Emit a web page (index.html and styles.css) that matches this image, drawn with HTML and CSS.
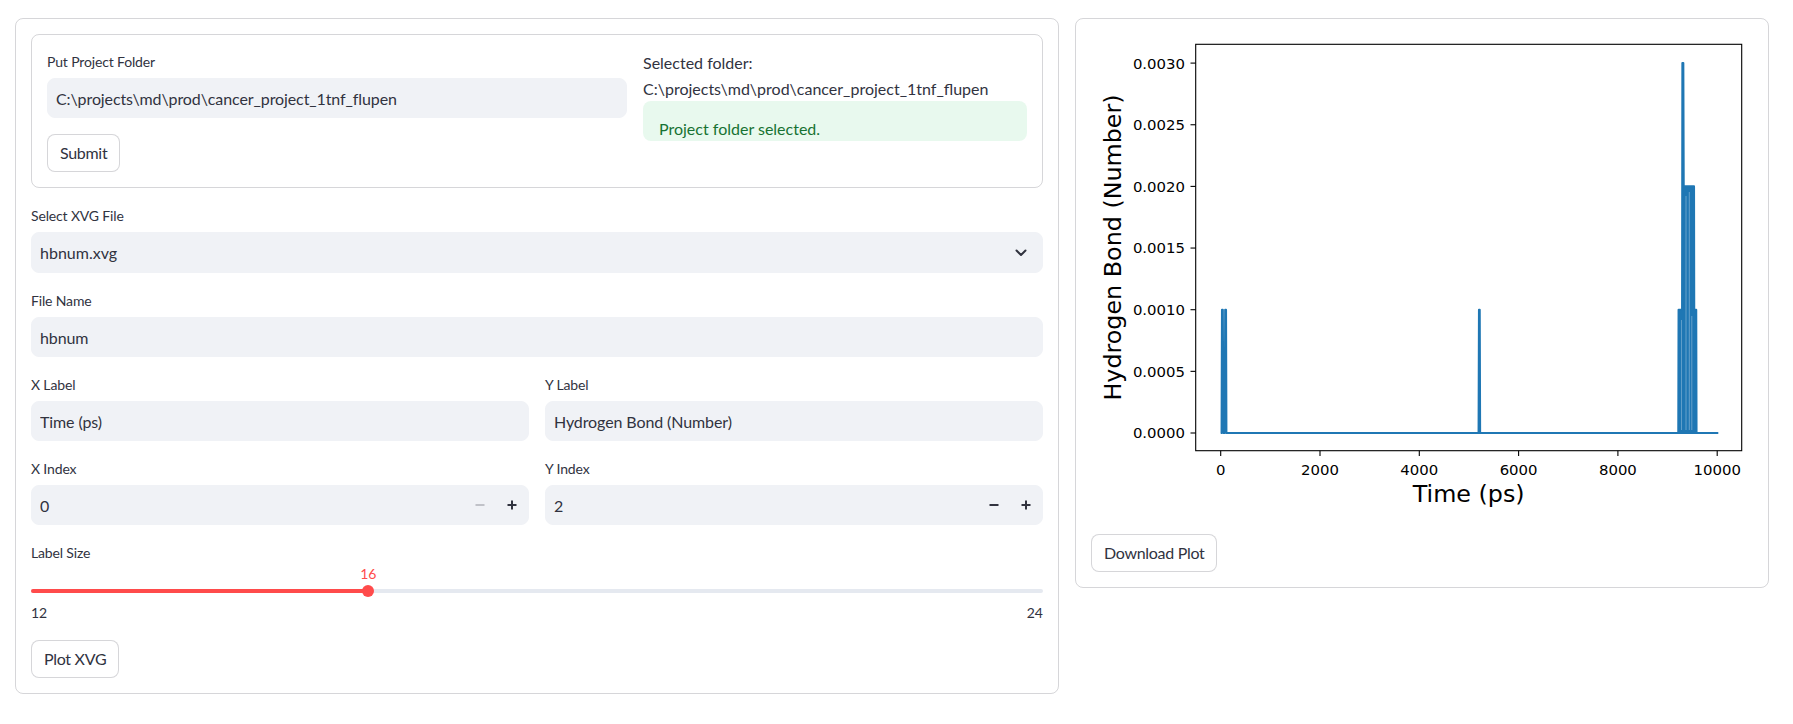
FILE: index.html
```html
<!DOCTYPE html>
<html lang="en">
<head>
<meta charset="utf-8">
<title>XVG Plotter</title>
<link rel="stylesheet" href="styles.css">
</head>
<body>
<main class="app">
  <section class="card">
    <form class="form-box">
      <div class="form-cols">
        <div class="col">
          <div class="field">
            <label class="wlabel">Put Project Folder</label>
            <input class="tinput" type="text" value="C:\projects\md\prod\cancer_project_1tnf_flupen" readonly>
          </div>
          <button type="button" class="btn">Submit</button>
        </div>
        <div class="col tight">
          <p class="md">Selected folder:<br>C:\projects\md\prod\cancer_project_1tnf_flupen</p>
          <div class="alert-success"><p>Project folder selected.</p></div>
        </div>
      </div>
    </form>

    <div class="field">
      <label class="wlabel">Select XVG File</label>
      <div class="select">
        <span class="select-val">hbnum.xvg</span>
        <svg class="chev" width="20" height="20" viewBox="0 0 20 20"><polyline points="5.5,7.5 10,12 14.5,7.5" fill="none" stroke="rgb(49,51,63)" stroke-width="2" stroke-linecap="round" stroke-linejoin="round"/></svg>
      </div>
    </div>

    <div class="field">
      <label class="wlabel">File Name</label>
      <input class="tinput" type="text" value="hbnum" readonly>
    </div>

    <div class="row2">
      <div class="field">
        <label class="wlabel">X Label</label>
        <input class="tinput" type="text" value="Time (ps)" readonly>
      </div>
      <div class="field">
        <label class="wlabel">Y Label</label>
        <input class="tinput" type="text" value="Hydrogen Bond (Number)" readonly>
      </div>
    </div>

    <div class="row2">
      <div class="field">
        <label class="wlabel">X Index</label>
        <div class="numinput">
          <input class="num-val" type="text" value="0" readonly>
          <button type="button" class="step disabled"><svg width="12" height="12" viewBox="0 0 12 12"><rect x="1.5" y="5" width="9" height="2" fill="currentColor"/></svg></button>
          <button type="button" class="step"><svg width="12" height="12" viewBox="0 0 12 12"><rect x="1.5" y="5" width="9" height="2" fill="currentColor"/><rect x="5" y="1.5" width="2" height="9" fill="currentColor"/></svg></button>
        </div>
      </div>
      <div class="field">
        <label class="wlabel">Y Index</label>
        <div class="numinput">
          <input class="num-val" type="text" value="2" readonly>
          <button type="button" class="step"><svg width="12" height="12" viewBox="0 0 12 12"><rect x="1.5" y="5" width="9" height="2" fill="currentColor"/></svg></button>
          <button type="button" class="step"><svg width="12" height="12" viewBox="0 0 12 12"><rect x="1.5" y="5" width="9" height="2" fill="currentColor"/><rect x="5" y="1.5" width="2" height="9" fill="currentColor"/></svg></button>
        </div>
      </div>
    </div>

    <div class="field">
      <label class="wlabel">Label Size</label>
      <div class="slider">
        <div class="track">
          <div class="fill" style="width: 33.333%"></div>
          <div class="thumb" style="left: 33.333%"><span class="thumb-val">16</span></div>
        </div>
      </div>
      <div class="ticks"><span>12</span><span>24</span></div>
    </div>

    <button type="button" class="btn">Plot XVG</button>
  </section>

  <section class="card">
    <svg class="plot" width="662" height="484" viewBox="0 0 662 484">
      <path class="series" d="M129.7 399 L130.6 399 L131 275.7 L131.8 275.7 L132.3 399 L133.8 399 L134.2 275.7 L135 275.7 L135.4 399 L387.6 399 L388 275.7 L388.7 275.7 L389.1 399 L627.3 399"/>
      <path class="series filled" d="M587.3 399 L587.6 275.7 L591.1 275.7 L591.4 29.1 L592.3 29.1 L592.7 152.4 L603 152.4 L603.2 275.7 L605.2 275.7 L605.5 399 Z"/>
      <g class="gaps">
        <line x1="590.6" y1="286" x2="590.6" y2="396"/>
        <line x1="595" y1="162" x2="595" y2="396"/>
        <line x1="598.3" y1="158" x2="598.3" y2="396"/>
        <line x1="600.8" y1="282" x2="600.8" y2="396"/>
      </g>
      <rect class="spines" x="104.7" y="10.3" width="546" height="406.4"/>
      <g class="tk">
        <line x1="99.5" y1="399" x2="104.7" y2="399"/>
        <line x1="99.5" y1="337.35" x2="104.7" y2="337.35"/>
        <line x1="99.5" y1="275.7" x2="104.7" y2="275.7"/>
        <line x1="99.5" y1="214.05" x2="104.7" y2="214.05"/>
        <line x1="99.5" y1="152.4" x2="104.7" y2="152.4"/>
        <line x1="99.5" y1="90.75" x2="104.7" y2="90.75"/>
        <line x1="99.5" y1="29.1" x2="104.7" y2="29.1"/>
        <line x1="129.7" y1="416.7" x2="129.7" y2="421.9"/>
        <line x1="229" y1="416.7" x2="229" y2="421.9"/>
        <line x1="328.3" y1="416.7" x2="328.3" y2="421.9"/>
        <line x1="427.6" y1="416.7" x2="427.6" y2="421.9"/>
        <line x1="526.9" y1="416.7" x2="526.9" y2="421.9"/>
        <line x1="626.2" y1="416.7" x2="626.2" y2="421.9"/>
      </g>
      <g class="tl-y">
        <text x="94" y="404.4">0.0000</text>
        <text x="94" y="342.75">0.0005</text>
        <text x="94" y="281.1">0.0010</text>
        <text x="94" y="219.45">0.0015</text>
        <text x="94" y="157.8">0.0020</text>
        <text x="94" y="96.15">0.0025</text>
        <text x="94" y="34.5">0.0030</text>
      </g>
      <g class="tl-x">
        <text x="129.7" y="441">0</text>
        <text x="229" y="441">2000</text>
        <text x="328.3" y="441">4000</text>
        <text x="427.6" y="441">6000</text>
        <text x="526.9" y="441">8000</text>
        <text x="626.2" y="441">10000</text>
      </g>
      <text class="axlabel" x="377.7" y="468.4">Time (ps)</text>
      <text class="axlabel" transform="translate(29.5 213.5) rotate(-90)">Hydrogen Bond (Number)</text>
    </svg>
    <button type="button" class="btn">Download Plot</button>
  </section>
</main>
</body>
</html>
```

FILE: styles.css
```css
* { box-sizing: border-box; }

body {
  margin: 0;
  background: #ffffff;
  color: rgb(49, 51, 63);
  font-family: Lato, "Liberation Sans", sans-serif;
  font-size: 16px;
}

.app {
  display: grid;
  grid-template-columns: 1044px 694px;
  column-gap: 16px;
  align-items: start;
  padding: 18px 24px 0 15px;
}

.card {
  border: 1px solid rgba(49, 51, 63, 0.2);
  border-radius: 8px;
  padding: 15px;
  display: flex;
  flex-direction: column;
  gap: 16px;
}

.form-box {
  margin: 0;
  border: 1px solid rgba(49, 51, 63, 0.2);
  border-radius: 8px;
  padding: 15px;
}

.form-cols {
  display: grid;
  grid-template-columns: 580fr 384fr;
  column-gap: 16px;
  align-items: start;
}

.col {
  display: flex;
  flex-direction: column;
  gap: 16px;
}

.col.tight { gap: 0; }

.field {
  display: flex;
  flex-direction: column;
}

.wlabel {
  font-size: 14px;
  line-height: 24px;
  height: 24px;
  margin-bottom: 4px;
  letter-spacing: -0.15px;
}

.tinput {
  height: 40px;
  width: 100%;
  background: rgb(240, 242, 246);
  border: 1px solid rgb(240, 242, 246);
  border-radius: 8px;
  padding: 0 8px;
  font: inherit;
  font-size: 16px;
  letter-spacing: -0.1px;
  color: rgb(49, 51, 63);
  outline: none;
}

.select {
  height: 41px;
  background: rgb(240, 242, 246);
  border: 1px solid rgb(240, 242, 246);
  border-radius: 8px;
  padding: 0 11px 0 8px;
  display: flex;
  align-items: center;
  justify-content: space-between;
}

.chev { display: block; }

.row2 {
  display: grid;
  grid-template-columns: 1fr 1fr;
  column-gap: 16px;
}

.numinput {
  height: 40px;
  background: rgb(240, 242, 246);
  border: 1px solid rgb(240, 242, 246);
  border-radius: 8px;
  display: flex;
  align-items: stretch;
}

.num-val {
  flex: 1;
  min-width: 0;
  background: transparent;
  border: none;
  padding: 0 8px;
  font: inherit;
  font-size: 16px;
  color: rgb(49, 51, 63);
  outline: none;
}

.step {
  width: 32px;
  border: none;
  background: transparent;
  padding: 0;
  display: flex;
  align-items: center;
  justify-content: center;
  color: rgb(49, 51, 63);
}

.step svg { display: block; }

.step.disabled { color: rgba(49, 51, 63, 0.25); }

.md {
  margin: 0;
  font-size: 16px;
  line-height: 25.6px;
}

.alert-success {
  height: 40px;
  overflow: hidden;
  background: rgba(33, 195, 84, 0.1);
  border-radius: 8px;
  padding: 15px 16px 16px;
  color: rgb(23, 114, 51);
}

.alert-success p {
  margin: 0;
  font-size: 16px;
  line-height: 25.6px;
}

.slider {
  position: relative;
  height: 33px;
}

.track {
  position: absolute;
  left: 0;
  right: 0;
  top: 20px;
  height: 4px;
  border-radius: 2px;
  background: rgb(229, 233, 240);
}

.fill {
  height: 100%;
  border-radius: 2px;
  background: rgb(255, 75, 75);
}

.thumb {
  position: absolute;
  top: -4px;
  width: 12px;
  height: 12px;
  margin-left: -6px;
  border-radius: 50%;
  background: rgb(255, 75, 75);
}

.thumb-val {
  position: absolute;
  left: 50%;
  bottom: 15px;
  transform: translateX(-50%);
  font-size: 14px;
  line-height: 16px;
  color: rgb(255, 75, 75);
  white-space: nowrap;
}

.ticks {
  display: flex;
  justify-content: space-between;
  font-size: 14px;
  line-height: 22px;
}

.btn {
  align-self: flex-start;
  height: 38px;
  padding: 0 12px;
  border: 1px solid rgba(49, 51, 63, 0.2);
  border-radius: 8px;
  background: #ffffff;
  color: rgb(49, 51, 63);
  font: inherit;
  font-size: 16px;
  line-height: 25.6px;
  letter-spacing: -0.3px;
}

.plot { display: block; }

.series {
  fill: none;
  stroke: #1f77b4;
  stroke-width: 2.1;
  stroke-linejoin: round;
}

.series.filled { fill: #1f77b4; }

.gaps line {
  stroke: #ffffff;
  stroke-width: 0.7;
  opacity: 0.45;
}

.spines {
  fill: none;
  stroke: #000000;
  stroke-width: 1.1;
}

.tk line {
  stroke: #000000;
  stroke-width: 1.1;
}

.tl-y text, .tl-x text {
  font-family: "DejaVu Sans", sans-serif;
  font-size: 14.9px;
  fill: #000000;
}

.tl-y text { text-anchor: end; }
.tl-x text { text-anchor: middle; }

.axlabel {
  font-family: "DejaVu Sans", sans-serif;
  font-size: 23.8px;
  fill: #000000;
  text-anchor: middle;
}
```
